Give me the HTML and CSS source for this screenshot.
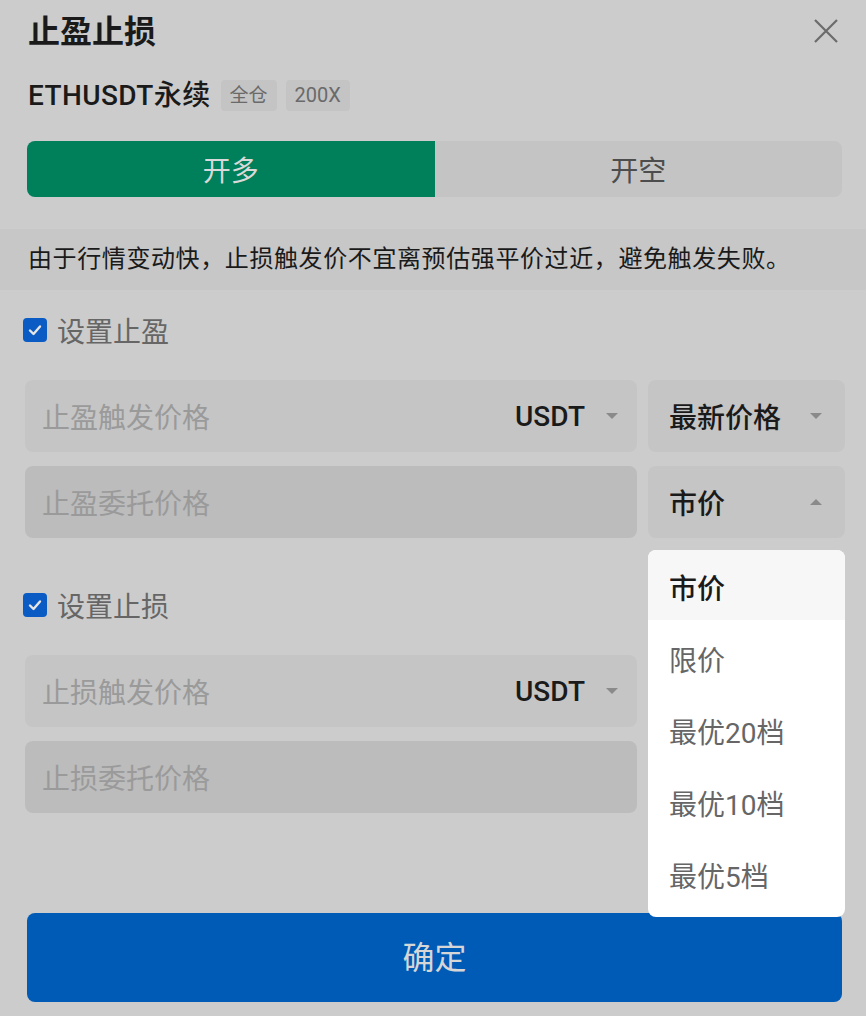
FILE: index.html
```html
<!DOCTYPE html>
<html lang="zh-CN">
<head>
  <meta charset="UTF-8" />
  <meta name="viewport" content="width=device-width, initial-scale=1.0"/>
  <title>止盈止损</title>
  <link rel="stylesheet" href="styles.css">
</head>
<body>
  <div class="sheet">
    <div class="header">
      <h1 class="title">止盈止损</h1>
      <button class="close" type="button">
        <svg width="26" height="26" viewBox="0 0 26 26"><path d="M2 2 L24 24 M24 2 L2 24" stroke="#6b6b6b" stroke-width="2.2" fill="none"/></svg>
      </button>
    </div>

    <div class="symbol">
      <span class="symbol-name">ETHUSDT永续</span>
      <span class="tag">全仓</span>
      <span class="tag">200X</span>
    </div>

    <div class="tabs">
      <div class="tab tab-long">开多</div>
      <div class="tab">开空</div>
    </div>
  </div>

  <div class="notice">由于行情变动快，止损触发价不宜离预估强平价过近，避免触发失败。</div>

  <div class="sheet">
    <label class="check">
      <span class="box"><svg width="16" height="16" viewBox="0 0 16 16"><path d="M3 8.5 L6.5 12 L13 4.5" stroke="#e6e6e6" stroke-width="2.4" fill="none" stroke-linecap="round" stroke-linejoin="round"/></svg></span>
      设置止盈
    </label>
    <div class="field-row">
      <div class="input">
        <span class="placeholder">止盈触发价格</span>
        <span class="unit">USDT</span>
        <span class="caret"></span>
      </div>
      <div class="select">
        <span class="select-value">最新价格</span>
        <span class="caret"></span>
      </div>
    </div>
    <div class="field-row">
      <div class="input input-disabled">
        <span class="placeholder">止盈委托价格</span>
      </div>
      <div class="select select-open">
        <span class="select-value">市价</span>
        <span class="caret caret-up"></span>
        <ul class="dropdown">
          <li class="option option-active">市价</li>
          <li class="option">限价</li>
          <li class="option">最优20档</li>
          <li class="option">最优10档</li>
          <li class="option">最优5档</li>
        </ul>
      </div>
    </div>

    <label class="check check-loss">
      <span class="box"><svg width="16" height="16" viewBox="0 0 16 16"><path d="M3 8.5 L6.5 12 L13 4.5" stroke="#e6e6e6" stroke-width="2.4" fill="none" stroke-linecap="round" stroke-linejoin="round"/></svg></span>
      设置止损
    </label>
    <div class="field-row">
      <div class="input">
        <span class="placeholder">止损触发价格</span>
        <span class="unit">USDT</span>
        <span class="caret"></span>
      </div>
    </div>
    <div class="field-row">
      <div class="input input-disabled">
        <span class="placeholder">止损委托价格</span>
      </div>
    </div>

    <button class="confirm" type="button">确定</button>
  </div>
</body>
</html>
```

FILE: styles.css
```css
body { margin: 0; background-color: #cccccc; font-family: Roboto, "Noto Sans CJK SC", sans-serif; color: #1a1a1a; }
.sheet { padding: 0 21px 0 25px; }

.header { height: 64px; display: flex; align-items: center; justify-content: space-between; padding-left: 3px; }
.title { margin: 0; font-size: 32px; font-weight: 700; line-height: 40px; color: #1a1a1a; }
.close { background: none; border: none; padding: 0; margin-right: 6px; margin-top: -2px; cursor: pointer; display: flex; }

.symbol { display: flex; align-items: center; gap: 9px; margin-top: 16px; height: 31px; padding-left: 3px; }
.symbol-name { font-size: 28px; font-weight: 500; line-height: 31px; letter-spacing: 0.4px; margin-right: 1px; }
.tag { background-color: #c4c4c4; color: #6a6a6a; font-size: 19px; line-height: 31px; height: 31px; padding: 0 9px; border-radius: 4px; }
.tag + .tag { font-size: 20px; }

.tabs { display: flex; margin: 30px 3px 0 2px; height: 56px; border-radius: 8px; overflow: hidden; background-color: #c4c4c4; }
.tab { flex: 1; display: flex; align-items: center; justify-content: center; font-size: 28px; color: #4d4d4d; }
.tab-long { background-color: #00805a; color: #d9d9d9; }

.notice { margin-top: 32px; height: 61px; line-height: 61px; padding-left: 28px; background-color: #c7c7c7; font-size: 24px; color: #1a1a1a; letter-spacing: 0.6px; }

.check { display: flex; align-items: center; gap: 10px; margin-top: 22px; height: 36px; font-size: 28px; color: #666666; margin-left: -2px; }
.check-loss { margin-top: 49px; }
.box { width: 24px; height: 24px; border-radius: 4px; background-color: #0a5cc4; display: flex; align-items: center; justify-content: center; }

.field-row { display: flex; gap: 11px; margin-top: 14px; position: relative; }
.check + .field-row { margin-top: 32px; }
.input { width: 612px; height: 72px; box-sizing: border-box; background-color: #c5c5c5; border-radius: 8px; display: flex; align-items: center; padding: 0 19px 0 17px; }
.input-disabled { background-color: #bcbcbc; }
.placeholder { flex: 1; font-size: 28px; color: #9a9a9a; }
.unit { font-size: 28px; font-weight: 500; color: #1a1a1a; margin-right: 21px; }

.select { flex: 1; height: 72px; box-sizing: border-box; background-color: #c5c5c5; border-radius: 8px; display: flex; align-items: center; justify-content: space-between; padding: 0 23px 0 21px; position: relative; }
.select-value { font-size: 28px; font-weight: 500; color: #1a1a1a; }

.caret { width: 0; height: 0; border-left: 6px solid transparent; border-right: 6px solid transparent; border-top: 6px solid #8a8a8a; }
.caret-up { border-top: none; border-bottom: 6px solid #8a8a8a; }

.dropdown { position: absolute; top: 84px; left: 0; right: 0; margin: 0; padding: 0 0 9px; list-style: none; background-color: #ffffff; border-radius: 8px; overflow: hidden; z-index: 2; }
.option { height: 72px; line-height: 84px; padding-left: 21px; font-size: 28px; color: #666666; }
.option:first-child { height: 70px; line-height: 80px; }
.option-active { background-color: #f7f7f7; color: #1a1a1a; font-weight: 500; }

.confirm { display: block; width: calc(100% - 5px); margin: 100px 3px 0 2px; height: 89px; border: none; border-radius: 8px; background-color: #005bb6; color: #d6d6d6; font-family: inherit; font-size: 32px; line-height: 84px; cursor: pointer; }
```
